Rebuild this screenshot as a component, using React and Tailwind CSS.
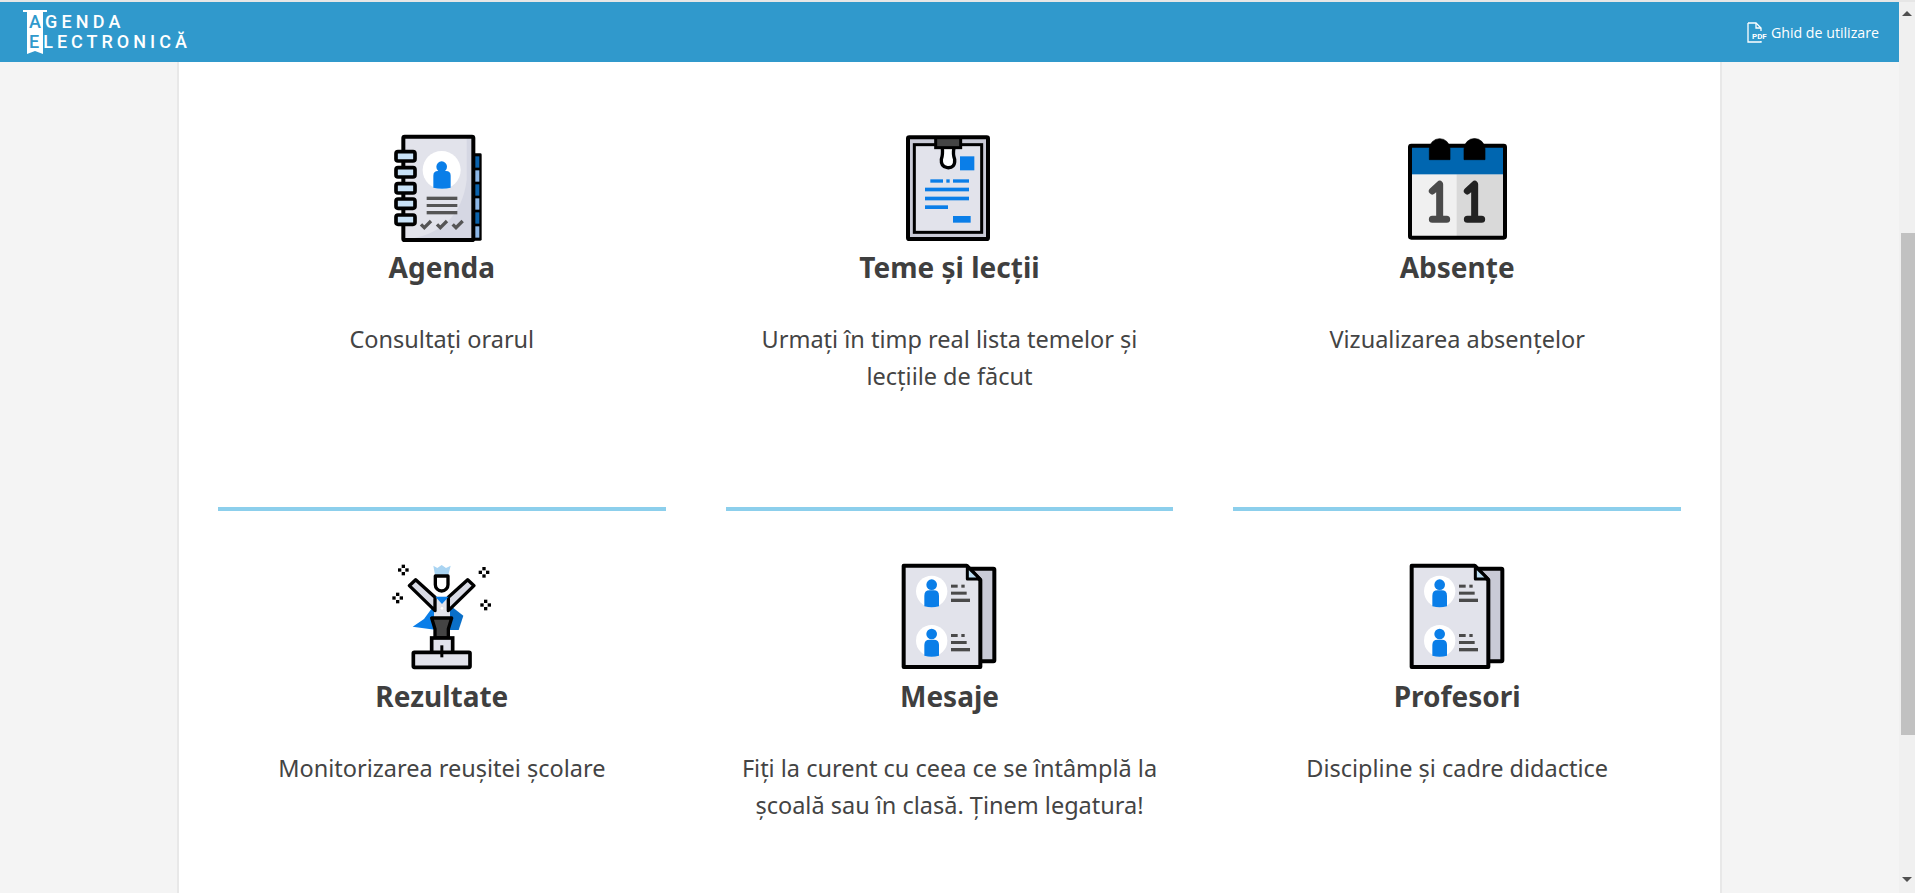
const BLUE = "#0a7ee8";
const PAPER = "#e2e3eb";

function Person({ cx, cy }) {
  return (
    <g>
      <circle cx={cx} cy={cy} r="47" fill="#fff" />
      <circle cx={cx} cy={cy - 20} r="16" fill={BLUE} />
      <path d={`M${cx - 22} ${cy + 45} v-32 q0 -16 16 -16 h12 q16 0 16 16 v32 q-22 6 -44 0z`} fill={BLUE} />
    </g>
  );
}

function ContactLines({ y }) {
  return (
    <g fill="#4a4a4a">
      <rect x="183" y={y} width="20" height="9" />
      <rect x="214" y={y} width="10" height="9" />
      <rect x="183" y={y + 21} width="47" height="9" />
      <rect x="183" y={y + 42} width="57" height="10" />
    </g>
  );
}

function AgendaIcon() {
  const tabs = [88, 130, 172, 214, 256, 298];
  return (
    <svg viewBox="6 0 360 360" className="w-[120px] h-[120px]">
      <rect x="278" y="85" width="27" height="262" fill="#000" rx="4" />
      {tabs.map((y, i) => (
        <rect key={y} x="285" y={y + 6} width="13" height="34" fill={i % 2 ? "#8db8e8" : "#0b63ad"} />
      ))}
      <rect x="70" y="35" width="210" height="310" rx="4" fill="#d5d7e3" />
      <path d="M70 35 h190 v130 q-20 160 -190 180z" fill="#e2e3eb" />
      <rect x="70" y="35" width="210" height="310" rx="4" fill="none" stroke="#000" strokeWidth="12" />
      {[80, 128, 176, 222, 270].map((y) => (
        <rect key={y} x="48" y={y} width="57" height="28" rx="6" fill="#c9e2f7" stroke="#000" strokeWidth="11" />
      ))}
      <circle cx="185" cy="135" r="57" fill="#fff" />
      <circle cx="185" cy="125" r="16" fill={BLUE} />
      <path d="M160 188 v-36 q0 -14 14 -14 h24 q14 0 14 14 v36 q-26 6 -52 0z" fill={BLUE} />
      <g fill="#555">
        <rect x="140" y="215" width="92" height="10" />
        <rect x="140" y="237" width="92" height="9" />
        <rect x="140" y="258" width="92" height="10" />
      </g>
      <g fill="none" stroke="#555" strokeWidth="10">
        <path d="M123 298 l10 10 l20 -20" />
        <path d="M171 298 l10 10 l20 -20" />
        <path d="M218 298 l10 10 l20 -20" />
      </g>
    </svg>
  );
}

function TemeIcon() {
  return (
    <svg viewBox="0 0 360 360" className="w-[120px] h-[120px]">
      <rect x="57" y="37" width="240" height="305" rx="4" fill="#c9cad6" stroke="#000" strokeWidth="12" />
      <rect x="76" y="59" width="202" height="263" fill={PAPER} stroke="#000" strokeWidth="9" />
      <path d="M160 68 q2 22 -3 35 q-2 22 18 25 q24 2 22 -25 q-6 -15 -2 -35" fill="#fff" stroke="#000" strokeWidth="10" />
      <rect x="140" y="38" width="75" height="30" fill="#444" stroke="#000" strokeWidth="9" />
      <g fill={BLUE}>
        <rect x="213" y="94" width="43" height="42" />
        <rect x="124" y="163" width="38" height="10" />
        <rect x="172" y="163" width="10" height="10" />
        <rect x="192" y="163" width="48" height="10" />
        <rect x="108" y="188" width="132" height="11" />
        <rect x="108" y="215" width="132" height="11" />
        <rect x="108" y="241" width="69" height="11" />
        <rect x="192" y="273" width="53" height="20" />
      </g>
    </svg>
  );
}

function CalendarIcon() {
  return (
    <svg viewBox="21 0 360 360" className="w-[120px] h-[120px]">
      <rect x="60" y="62" width="285" height="276" fill="#f0f0f0" />
      <rect x="200" y="148" width="145" height="190" fill="#d9d9d9" />
      <rect x="60" y="62" width="285" height="86" fill="#0066b0" />
      <rect x="60" y="62" width="285" height="276" rx="4" fill="none" stroke="#000" strokeWidth="12" />
      <path d="M118 104 v-32 a31 31 0 0 1 62 0 v32z" fill="#000" stroke="#000" strokeWidth="2" strokeLinejoin="round" />
      <path d="M222 104 v-32 a31 31 0 0 1 63 0 v32z" fill="#000" stroke="#000" strokeWidth="2" strokeLinejoin="round" />
      <g fill="none" strokeWidth="21" strokeLinecap="round" strokeLinejoin="round">
        <path d="M127 198 l22 -20 v105 M127 283 h43" stroke="#4a4a4a" />
        <path d="M232 198 l22 -20 v105 M232 283 h43" stroke="#222" />
      </g>
    </svg>
  );
}

function Sparkle({ x, y }) {
  return (
    <g fill="#000">
      <rect x={x - 5} y={y - 16} width="10" height="10" />
      <rect x={x - 5} y={y + 6} width="10" height="10" />
      <rect x={x - 16} y={y - 5} width="10" height="10" />
      <rect x={x + 6} y={y - 5} width="10" height="10" />
    </g>
  );
}

function RezultateIcon() {
  return (
    <svg viewBox="6 0 360 360" className="w-[120px] h-[120px]">
      <Sparkle x={70} y={48} />
      <Sparkle x={312} y={55} />
      <Sparkle x={53} y={132} />
      <Sparkle x={317} y={153} />
      <path d="M165 150 L132 195 L98 218 L170 228z" fill={BLUE} />
      <path d="M205 150 L250 185 L236 228 L200 228z" fill="#0a6fc8" />
      <path d="M160 35 L172 42 L185 33 L198 42 L212 35 L205 62 H165z" fill="#a9d4f2" />
      <path d="M166 66 v26 a19 19 0 0 0 38 0 v-26z" fill="#fff" stroke="#000" strokeWidth="10" strokeLinejoin="round" />
      <path d="M162 128 H210 V192 H162z" fill="#e2e3eb" />
      <path d="M88 95 L107 77 L165 130 V170z" fill="#d9dbe5" stroke="#000" strokeWidth="10" strokeLinejoin="round" />
      <path d="M282 95 L263 77 L205 130 V170z" fill="#d9dbe5" stroke="#000" strokeWidth="10" strokeLinejoin="round" />
      <path d="M166 128 H206 L186 150z" fill={BLUE} />
      <circle cx="186" cy="163" r="4" fill="#fff" />
      <path d="M155 192 H215 L205 225 V252 H165 V225z" fill="#444" stroke="#000" strokeWidth="10" strokeLinejoin="round" />
      <rect x="155" y="252" width="63" height="46" fill={PAPER} stroke="#000" strokeWidth="11" />
      <rect x="100" y="295" width="170" height="45" rx="3" fill={PAPER} stroke="#000" strokeWidth="11" />
      <rect x="181" y="274" width="9" height="36" fill="#000" />
    </svg>
  );
}

function ContactsIcon({ viewBox }) {
  return (
    <svg viewBox={viewBox} className="w-[120px] h-[120px]">
      <rect x="235" y="44" width="78" height="278" rx="3" fill="#c9cad6" stroke="#000" strokeWidth="12" />
      <path d="M41 35 H230 L271 78 V339 H41z" fill={PAPER} stroke="#000" strokeWidth="12" strokeLinejoin="round" />
      <path d="M232 38 V75 H270z" fill="#bfe0f5" stroke="#000" strokeWidth="9" strokeLinejoin="round" />
      <Person cx={125} cy={112} />
      <Person cx={125} cy={260} />
      <ContactLines y={92} />
      <ContactLines y={240} />
    </svg>
  );
}

const rows = [
  [
    { icon: <AgendaIcon />, title: "Agenda", text: ["Consultați orarul"] },
    { icon: <TemeIcon />, title: "Teme și lecții", text: ["Urmați în timp real lista temelor și", "lecțiile de făcut"] },
    { icon: <CalendarIcon />, title: "Absențe", text: ["Vizualizarea absențelor"] },
  ],
  [
    { icon: <RezultateIcon />, title: "Rezultate", text: ["Monitorizarea reușitei școlare"] },
    { icon: <ContactsIcon viewBox="-3 0 360 360" />, title: "Mesaje", text: ["Fiți la curent cu ceea ce se întâmplă la", "școală sau în clasă. Ținem legatura!"] },
    { icon: <ContactsIcon viewBox="-3 0 360 360" />, title: "Profesori", text: ["Discipline și cadre didactice"] },
  ],
];

function Tile({ item, divider }) {
  return (
    <div className={divider ? "flex flex-col items-center border-t-4 border-[#8ccfec] pt-[43px] h-[430px]" : "flex flex-col items-center pt-[63px] h-[445px]"}>
      {item.icon}
      <h3 className="text-[28px] leading-[44px] font-bold text-[#3f3f3f]">{item.title}</h3>
      <div className="mt-[32px] text-[23.5px] leading-[37px] text-[#444] text-center">
        {item.text.map((line) => (
          <p key={line}>{line}</p>
        ))}
      </div>
    </div>
  );
}

function Logo() {
  return (
    <div className="relative ml-[27px] w-[200px] h-[44px] font-['Roboto',sans-serif] font-medium text-[18px] leading-[20px] text-white">
      <svg viewBox="0 0 24 44" className="absolute left-[-4px] top-0 w-[24px] h-[44px]">
        <path d="M0 0 H24 V2 H20 V44 L12 41 L4 44 V2 H0z" fill="#fff" />
      </svg>
      <div className="relative pt-[2px] pl-[2px]">
        <div className="tracking-[4.2px]"><span className="text-[#3099cc]">A</span>GENDA</div>
        <div className="tracking-[4px]"><span className="text-[#3099cc]">E</span>LECTRONICĂ</div>
      </div>
    </div>
  );
}

function PdfIcon() {
  return (
    <svg viewBox="0 0 24 22" className="w-[24px] h-[22px]">
      <path d="M1 1 H9 L14 6 V9 M1 1 V20 H14 V19" fill="none" stroke="#fff" strokeWidth="1.3" />
      <path d="M9 1 V6 H14" fill="none" stroke="#fff" strokeWidth="1.3" />
      <text x="5" y="17" fontSize="8" fontWeight="700" fill="#fff" fontFamily="Roboto, sans-serif">PDF</text>
    </svg>
  );
}

function Scrollbar() {
  return (
    <div className="w-4 h-full bg-[#f0f0f0] flex flex-col items-end shrink-0">
      <div className="w-4 h-[16px] mt-[9px] flex justify-center">
        <div className="w-0 h-0 border-x-[5px] border-x-transparent border-b-[5px] border-b-[#505050]" />
      </div>
      <div className="w-[14px] h-[502px] mt-[206px] bg-[#c1c1c1]" />
      <div className="flex-1" />
      <div className="w-4 h-[16px] flex justify-center">
        <div className="w-0 h-0 border-x-[5px] border-x-transparent border-t-[5px] border-t-[#505050]" />
      </div>
    </div>
  );
}

export default function App() {
  return (
    <div className="flex flex-col h-[893px] overflow-hidden bg-[#f4f4f4] font-['Noto_Sans',sans-serif]">
      <div className="h-[2px] bg-[#e6e6e6] shrink-0" />
      <div className="flex flex-1 min-h-0">
        <div className="flex-1 flex flex-col min-w-0">
          <header className="h-[60px] shrink-0 bg-[#3099cc] flex items-center justify-between pr-5">
            <Logo />
            <a className="flex items-center text-white text-[14.2px] pt-px font-['Open_Sans',sans-serif]">
              <PdfIcon />
              Ghid de utilizare
            </a>
          </header>
          <main className="ml-[177px] w-[1545px] flex-1 min-h-0 overflow-hidden bg-white border-x-2 border-[#e8e8e8] px-[39px]">
            {rows.map((row, r) => (
              <div key={r} className="grid grid-cols-3 gap-x-[60px]">
                {row.map((item) => (
                  <Tile key={item.title} item={item} divider={r > 0} />
                ))}
              </div>
            ))}
          </main>
        </div>
        <Scrollbar />
      </div>
    </div>
  );
}
